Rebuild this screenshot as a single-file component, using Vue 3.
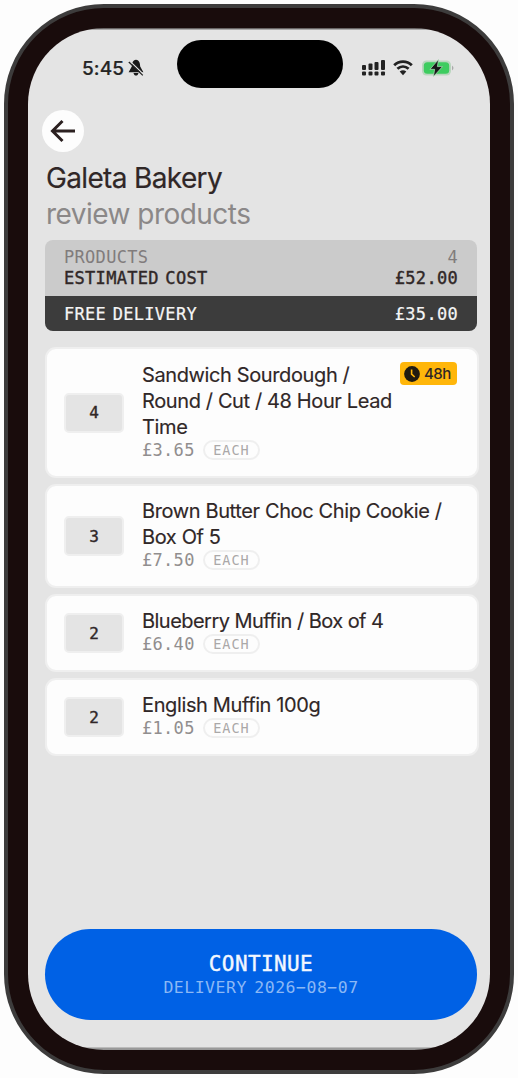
<script setup>
const products = [
  { qty: 4, lines: ['Sandwich Sourdough /', 'Round / Cut / 48 Hour Lead', 'Time'], price: '£3.65', lead: '48h', size: 'tall' },
  { qty: 3, lines: ['Brown Butter Choc Chip Cookie /', 'Box Of 5'], price: '£7.50', size: 'medium' },
  { qty: 2, lines: ['Blueberry Muffin / Box of 4'], price: '£6.40', size: 'short snug' },
  { qty: 2, lines: ['English Muffin 100g'], price: '£1.05', size: 'short' },
]
</script>

<template>
  <div class="stage">
    <div class="bezel">
      <main class="screen">
        <div class="island"></div>
        <header class="status">
          <span class="time">5:45</span>
          <svg class="bell" width="18" height="18" viewBox="0 0 18 18">
            <path d="M9 .8C5.6 1.4 5 4.2 4.8 7.5L1.6 13.2H16.4L13.2 7.5C13 4.2 12.4 1.4 9 .8ZM6.5 14H11.5C11 17.4 7 17.4 6.5 14Z" fill="#1b1b1b" />
            <path d="M3.2 2.5L16.6 15.4" stroke="#e4e4e4" stroke-width="1.2" />
            <path d="M1.8 3L15.8 16.4" stroke="#222" stroke-width="1.3" />
          </svg>
          <span class="spacer"></span>
          <svg class="signal" width="25" height="18" viewBox="0 0 25 18">
            <g fill="#222">
              <rect x="1" y="6" width="4" height="5" rx="1" /><rect x="7.5" y="4.5" width="4" height="6.5" rx="1" />
              <rect x="13.5" y="3" width="4" height="8" rx="1" /><rect x="20" y="1" width="4" height="10" rx="1" />
              <rect x="1" y="12.5" width="4" height="4" rx="1" /><rect x="7.5" y="12.5" width="4" height="4" rx="1" />
              <rect x="13.5" y="12.5" width="4" height="4" rx="1" /><rect x="20" y="12.5" width="4" height="4" rx="1" />
            </g>
          </svg>
          <svg class="wifi" width="20" height="16" viewBox="0 0 20 16">
            <g fill="none" stroke="#222" stroke-width="2.8">
              <path d="M1.2 5.2C6.2 .3 13.8 .3 18.8 5.2" /><path d="M4.4 8.8C7.7 5.8 12.3 5.8 15.6 8.8" />
            </g>
            <path d="M6.7 11.6Q10 9 13.3 11.6L10 15.2Z" fill="#222" />
          </svg>
          <svg class="battery" width="33" height="18" viewBox="0 0 33 18">
            <rect x="0" y="1.5" width="29" height="15" rx="4.5" fill="#b9d6be" />
            <rect x="1.8" y="3.3" width="25.4" height="11.4" rx="3.5" fill="#3dcc5f" />
            <path d="M30 6.5Q33 9 30 11.5Z" fill="#aaa" />
            <path d="M16.5 .5L8 10.3H12.6L11.5 17.5L20.5 7.6H15.4Z" fill="#171717" stroke="#b4dfbe" stroke-width=".7" />
          </svg>
        </header>

        <div class="back">
          <svg width="28" height="28" viewBox="0 0 28 28"><path d="M26 14H3.5M13.5 4L3.5 14L13.5 24" fill="none" stroke="#2b2020" stroke-width="3" /></svg>
        </div>

        <h1>Galeta Bakery</h1>
        <p class="subtitle">review products</p>

        <section class="summary">
          <div class="totals">
            <div class="row muted"><span>PRODUCTS</span><span>4</span></div>
            <div class="row strong"><span>ESTIMATED COST</span><span>£52.00</span></div>
          </div>
          <div class="row delivery"><span>FREE DELIVERY</span><span>£35.00</span></div>
        </section>

        <section class="list">
          <article v-for="p in products" :key="p.price" class="card" :class="p.size">
            <div class="qty">{{ p.qty }}</div>
            <div class="info">
              <div v-for="line in p.lines" :key="line" class="name">{{ line }}</div>
              <div class="pricing"><span class="price">{{ p.price }}</span><span class="each">EACH</span></div>
            </div>
            <div v-if="p.lead" class="lead">
              <svg width="16" height="16" viewBox="0 0 16 16"><circle cx="8" cy="8" r="7.9" fill="#201b10" /><path d="M7.6 3.5V8.2L10.7 11" fill="none" stroke="#ffb60a" stroke-width="1.6" /></svg>
              <span>{{ p.lead }}</span>
            </div>
          </article>
        </section>

        <div class="continue">
          <span class="action">CONTINUE</span>
          <span class="date">DELIVERY 2026−08−07</span>
        </div>
      </main>
    </div>
  </div>
</template>

<style>
body { background: #fdfdfd; }
</style>

<style scoped>
* { box-sizing: border-box; }
.stage { width: 518px; height: 1078px; padding: 4px; overflow: hidden; font-family: Inter, "Liberation Sans", sans-serif; color: #302727; }
.bezel { width: 510px; height: 1070px; padding: 20px; border: 4px solid #3d3c3c; border-radius: 100px; background: #190c0c; }
.screen { position: relative; width: 462px; height: 1022px; overflow: hidden; border-radius: 76px; background: linear-gradient(#686565 0 1px, #aaa 1px 2px, #e4e4e4 2px 1019px, #bbb 1019px 1020px, #999 1020px); padding: 2px 12px 2px 17px; display: flex; flex-direction: column; }
.island { position: absolute; top: 12px; left: 149px; width: 166px; height: 48px; border-radius: 24px; background: #000; }
.status { height: 76px; flex: none; display: flex; align-items: center; padding: 0 23px 0 37px; }
.time { font-size: 19px; font-weight: 500; letter-spacing: .1px; color: #252525; width: 45px; -webkit-text-stroke: .2px #252525; }
.spacer { flex: 1; }
.wifi { margin-left: 7px; }
.battery { margin-left: 9px; }
.back { width: 42px; height: 42px; flex: none; margin: 4px 0 0 -3px; border-radius: 50%; background: #fdfdfd; display: grid; place-items: center; }
h1, .subtitle { margin: 0; font-size: 28px; font-weight: 400; line-height: 36px; white-space: nowrap; height: 36px; flex: none; }
h1 { margin-top: 8px; padding-left: 1px; letter-spacing: -.65px; -webkit-text-stroke: .2px #302727; }
.subtitle { padding-left: 1px; color: #8b8888; letter-spacing: -.53px; }
.summary, .price, .each, .qty, .continue { font-family: "DejaVu Sans Mono", monospace; }
.summary { width: 432px; height: 91px; flex: none; margin-top: 8px; overflow: hidden; border-radius: 8px; background: #cbcbcb; font-size: 17px; letter-spacing: .3px; }
.totals { height: 56px; padding-top: 7px; }
.row { display: flex; justify-content: space-between; padding: 0 19px; line-height: 21px; word-spacing: -4px; }
.muted { color: #817c7c; }
.strong { -webkit-text-stroke: .4px #302727; }
.delivery { height: 35px; line-height: 36px; background: #3c3c3c; color: #f5f5f5; -webkit-text-stroke: .2px #f5f5f5; }
.list { display: flex; flex-direction: column; gap: 6px; margin-top: 16px; }
.card { position: relative; width: 434px; display: flex; align-items: center; padding: 0 20px 0 19px; border: 2px solid #efefef; border-radius: 11px; background: #fdfdfd; }
.tall { height: 131px; }
.medium { height: 104px; }
.short { height: 78px; }
.qty { width: 60px; height: 40px; flex: none; margin-left: -2px; border: 2px solid #efefef; border-radius: 5px; background: #e4e4e4; display: grid; place-items: center; font-size: 16px; -webkit-text-stroke: .4px #302727; }
.info { margin-left: 18px; padding-bottom: 4px; }
.name { font-size: 20px; line-height: 26px; letter-spacing: -.38px; white-space: nowrap; -webkit-text-stroke: .15px #302727; }
.snug .name { letter-spacing: -.54px; }
.pricing { display: flex; align-items: center; height: 20px; }
.price { font-size: 17px; letter-spacing: .3px; color: #918e8e; width: 61px; }
.each { width: 57px; height: 20px; border: 2px solid #efefef; border-radius: 10px; display: grid; place-items: center; font-size: 13.5px; letter-spacing: 1px; color: #aaa8a8; line-height: 16px; }
.lead { position: absolute; top: 13px; right: 20px; width: 57px; height: 23px; border-radius: 4px; background: #ffb60a; display: flex; align-items: center; gap: 4px; padding-left: 4px; font-size: 15px; letter-spacing: -.5px; font-weight: 500; }
.continue { width: 432px; height: 91px; flex: none; margin-top: auto; margin-bottom: 28px; border-radius: 46px; background: #0061e5; color: #f2f7ff; display: flex; flex-direction: column; align-items: center; padding-top: 23px; }
.action { font-size: 21px; line-height: 25px; letter-spacing: .4px; -webkit-text-stroke: .4px #f2f7ff; }
.date { font-size: 16.5px; line-height: 22px; letter-spacing: .5px; word-spacing: -3px; color: #8bb8f5; }
</style>
